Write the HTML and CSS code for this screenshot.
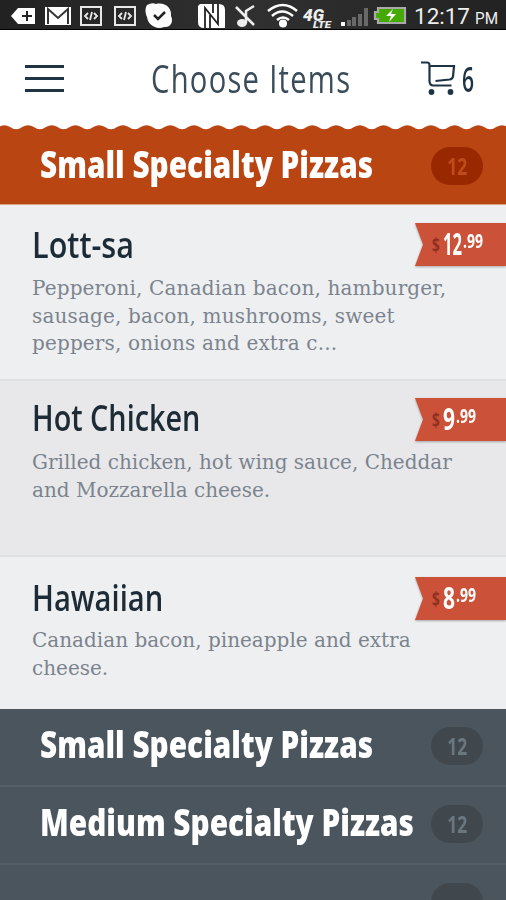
FILE: index.html
```html
<!DOCTYPE html>
<html lang="en">
<head>
    <meta charset="UTF-8">
    <meta name="viewport" content="width=device-width, initial-scale=1.0">
    <title>Choose Items</title>
    <link rel="stylesheet" href="styles.css">
</head>
<body>

    <!-- Phone status bar -->
    <div class="status-bar">
        <svg class="status-icons" width="506" height="30" viewBox="0 0 506 30">
            <!-- back tag -->
            <path d="M11 16l7-8h17v16H18z" fill="#fff"/>
            <path d="M27 11v10M22 16h10" stroke="#222" stroke-width="2"/>
            <!-- mail -->
            <rect x="45" y="7" width="26" height="18" fill="#fff"/>
            <path d="M48 24V9l10 9 10-9v15" fill="none" stroke="#333" stroke-width="2"/>
            <!-- code boxes -->
            <g fill="none" stroke="#e8e8e8" stroke-width="2">
                <rect x="81" y="7" width="20" height="18"/>
                <rect x="115" y="7" width="20" height="18"/>
                <path d="M88 13l-3 3 3 3M94 13l3 3-3 3M92 12l-2 8M122 13l-3 3 3 3M128 13l3 3-3 3M126 12l-2 8" stroke-width="1.800"/>
            </g>
            <!-- check -->
            <path d="M147 5q5-3 9-1c9-2 16 4 15 12 3 6-1 12-7 11-8 3-16-2-17-10-2-4-2-9 0-12z" fill="#fff"/>
            <path d="M154 15l4 4 7-7" fill="none" stroke="#222" stroke-width="2.5"/>
            <!-- nfc -->
            <path d="M200 4h19q6 0 6 6v18h-21q-6 0-6-6V6z" fill="#fff"/>
            <path d="M205 28V8l13 16V4M210 28V15M213 4v9" fill="none" stroke="#222" stroke-width="1.800"/>
            <!-- muted note -->
            <g fill="none" stroke="#eee" stroke-width="2.5">
                <path d="M236 7l18 18M254 6l-8 5v12"/>
            </g>
            <ellipse cx="242" cy="23" rx="5" ry="4" fill="#eee"/>
            <!-- wifi -->
            <g fill="none" stroke="#fff" stroke-width="2.500">
                <path d="M268 11q15-12 29 0M272 16q10-9 21 0M277 20q6-5 12 0"/>
            </g>
            <circle cx="283" cy="23.500" r="4" fill="#fff"/>
            <!-- network -->
            <text class="net" x="303" y="21" textLength="21" lengthAdjust="spacingAndGlyphs">4G</text>
            <text class="lte" x="313" y="28" textLength="18" lengthAdjust="spacingAndGlyphs">LTE</text>
            <!-- signal -->
            <rect x="341" y="22" width="4" height="4" fill="#fff"/>
            <path d="M347 20h4v6h-4zM352 17h4v9h-4zM358 14h4v12h-4zM364 8h4v18h-4z" fill="#686868"/>
            <!-- battery -->
            <path d="M378 8h27v15h-27v-4h-3v-7h3z" fill="#4a0" stroke="#aaa" stroke-width="2.200"/>
            <path d="M393 9l-7 7h5l-2 6 7-8h-5z" fill="#fff"/>
            <text class="clock" x="414" y="24" textLength="56" lengthAdjust="spacingAndGlyphs">12:17</text>
            <text class="ampm" x="475" y="24" textLength="23" lengthAdjust="spacingAndGlyphs">PM</text>
        </svg>
    </div>

    <header class="top-bar">
        <button class="menu-button" aria-label="Menu">
            <span></span><span></span><span></span>
        </button>
        <h1>Choose Items</h1>
        <div class="cart">
            <svg width="36" height="36" viewBox="0 0 36 36">
                <path d="M0 2.500h6q2.500 0 2.500 2.500v16q0 4.500 4 4.500h18M8.500 6h24.500l-1 10.500q-.5 2.500-3.500 3l-14 1.500" fill="none" stroke="#1e3444" stroke-width="2.200"/>
                <circle cx="10.500" cy="32" r="2.900" fill="#1e3444"/>
                <circle cx="29.500" cy="32" r="2.900" fill="#1e3444"/>
            </svg>
            <span>6</span>
        </div>
    </header>

    <svg class="scallop" width="506" height="5">
        <defs>
            <pattern id="wave" x="-7.500" width="23.700" height="5" patternUnits="userSpaceOnUse">
                <path d="M0 5V4.300Q3 4.300 6 2Q11.850-1.500 17.700 2Q20.700 4.300 23.700 4.300V5z" fill="#b94512"/>
            </pattern>
        </defs>
        <rect width="506" height="5" fill="url(#wave)"/>
    </svg>

    <section class="category open">
        <h2>Small Specialty Pizzas</h2>
        <span class="count"><b>12</b></span>
    </section>

    <ul class="items">
        <li class="item first">
            <div class="item-text">
                <h3>Lott-sa</h3>
                <p>Pepperoni, Canadian bacon, hamburger,<br>sausage, bacon, mushrooms, sweet<br>peppers, onions and extra c...</p>
            </div>
            <svg class="price" width="91" height="46" viewBox="0 0 91 46">
                <path d="M0 0h91v43H0l8-21.500z"/>
                <text class="dollar" x="17" y="29" textLength="8" lengthAdjust="spacingAndGlyphs">$</text>
                <text class="whole" x="28" y="32" textLength="19" lengthAdjust="spacingAndGlyphs">12</text>
                <text class="cents" x="48" y="24.500" textLength="20" lengthAdjust="spacingAndGlyphs">.99</text>
            </svg>
        </li>
        <li class="item second">
            <div class="item-text">
                <h3>Hot Chicken</h3>
                <p>Grilled chicken, hot wing sauce, Cheddar<br>and Mozzarella cheese.</p>
            </div>
            <svg class="price" width="91" height="46" viewBox="0 0 91 46">
                <path d="M0 0h91v43H0l8-21.500z"/>
                <text class="dollar" x="17" y="29" textLength="8" lengthAdjust="spacingAndGlyphs">$</text>
                <text class="whole" x="28" y="32" textLength="12" lengthAdjust="spacingAndGlyphs">9</text>
                <text class="cents" x="41" y="24.500" textLength="20" lengthAdjust="spacingAndGlyphs">.99</text>
            </svg>
        </li>
        <li class="item third">
            <div class="item-text">
                <h3>Hawaiian</h3>
                <p>Canadian bacon, pineapple and extra<br>cheese.</p>
            </div>
            <svg class="price" width="91" height="46" viewBox="0 0 91 46">
                <path d="M0 0h91v43H0l8-21.500z"/>
                <text class="dollar" x="17" y="29" textLength="8" lengthAdjust="spacingAndGlyphs">$</text>
                <text class="whole" x="28" y="32" textLength="12" lengthAdjust="spacingAndGlyphs">8</text>
                <text class="cents" x="41" y="24.500" textLength="20" lengthAdjust="spacingAndGlyphs">.99</text>
            </svg>
        </li>
    </ul>

    <section class="category">
        <h2>Small Specialty Pizzas</h2>
        <span class="count"><b>12</b></span>
    </section>
    <section class="category">
        <h2>Medium Specialty Pizzas</h2>
        <span class="count"><b>12</b></span>
    </section>
    <section class="category">
        <span class="count"></span>
    </section>

</body>
</html>
```
FILE: styles.css
```css
* {
    box-sizing: border-box;
}

body {
    margin: 0;
    width: 506px;
    height: 900px;
    overflow: hidden;
    background: #fff;
    font-family: 'Open Sans', 'Noto Sans', sans-serif;
    color: #1e3444;
}

h1, h2, h3, p, ul {
    margin: 0;
    padding: 0;
}

h1, h2, h3, p {
    white-space: nowrap;
    transform-origin: 0 50%;
}

/* Status bar */
.status-bar {
    height: 30px;
    background: linear-gradient(90deg, #222, #303030 50%, #222);
    border-bottom: 1px solid #000;
}

.status-icons {
    display: block;
}

.status-bar text {
    font-family: Roboto, sans-serif;
    fill: #eee;
}

.status-bar .net {
    font-size: 17px;
    font-weight: 900;
    font-style: italic;
}

.status-bar .lte {
    font-size: 9px;
    font-weight: 900;
    font-style: italic;
}

.status-bar .clock {
    font-size: 22px;
}

.status-bar .ampm {
    font-size: 16px;
}

/* Title bar */
.top-bar {
    display: flex;
    align-items: center;
    height: 95px;
    padding-left: 25px;
}

.menu-button {
    display: flex;
    flex-direction: column;
    gap: 9px;
    width: 39px;
    padding: 2px 0 0;
    border: none;
    background: none;
}

.menu-button span {
    height: 3px;
    background: #1e3444;
}

.top-bar h1 {
    width: 270px;
    margin-left: 87px;
    font-size: 39px;
    font-weight: 400;
    letter-spacing: 1.7px;
    color: #3a4c5a;
    transform: scaleX(0.748);
}

.cart {
    display: flex;
    align-items: center;
    gap: 5px;
}

.cart span {
    padding-top: 2px;
    font-size: 34px;
    font-weight: 600;
    transform: scaleX(0.62);
    transform-origin: 0 50%;
}

.scallop {
    display: block;
}

/* Category rows */
.category {
    display: flex;
    align-items: center;
    justify-content: space-between;
    height: 78px;
    padding: 0 23px 2px 40px;
    background: #4b555d;
    border-bottom: 2px solid #535f67;
}

.category.open {
    height: 75px;
    padding-bottom: 2px;
    background: #b94512;
    border-bottom: 1px solid #d6a28a;
}

.category h2 {
    width: 380px;
    padding-bottom: 5px;
    font-size: 37px;
    font-weight: 800;
    color: #fff;
    transform: scaleX(0.804);
}

.count {
    display: flex;
    flex-shrink: 0;
    align-items: center;
    justify-content: center;
    width: 52px;
    height: 38px;
    margin-left: auto;
    border-radius: 19px;
    background: #40484e;
    color: #6b7780;
}

.count b {
    font-size: 23px;
    transform: scaleX(0.76);
}

.open .count {
    background: #992800;
    color: #bd4b1c;
}

/* Menu items */
.items {
    list-style: none;
}

.item {
    display: flex;
    justify-content: space-between;
    height: 176px;
    padding: 18px 0 0 32px;
    background: #eeeff1;
    border-bottom: 2px solid #dfe1e3;
}

.item.second {
    padding-top: 17px;
    background: #e8e8ea;
}

.item.third {
    height: 152px;
    border-bottom: none;
    padding-top: 20px;
}

.item-text {
    width: 380px;
}

.item h3 {
    height: 45px;
    font-size: 36px;
    line-height: 43px;
    font-weight: 550;
    color: #1c2b36;
    transform: scaleX(0.8);
}

.item.first h3 {
    transform: scaleX(0.85);
}

.item.second h3,
.item.third h3 {
    height: 44px;
    line-height: 40px;
}

.item.third h3 {
    line-height: 41px;
    transform: scaleX(0.81);
}

.item p {
    margin-top: 7px;
    font-family: 'DejaVu Serif', serif;
    font-size: 20px;
    line-height: 27.7px;
    letter-spacing: 0.15px;
    color: #7b848e;
}

.item.second p,
.item.third p {
    letter-spacing: 0;
}

.item.third p {
    margin-top: 6px;
}

.price {
    flex-shrink: 0;
    fill: #cb5139;
    filter: drop-shadow(0 1px 1px rgba(0, 0, 0, 0.3));
}

.price text {
    font-weight: 700;
    fill: #fff;
}

.price .dollar {
    font-size: 20px;
    fill: #8e3023;
}

.price .whole {
    font-size: 30px;
}

.price .cents {
    font-size: 19px;
}
```
